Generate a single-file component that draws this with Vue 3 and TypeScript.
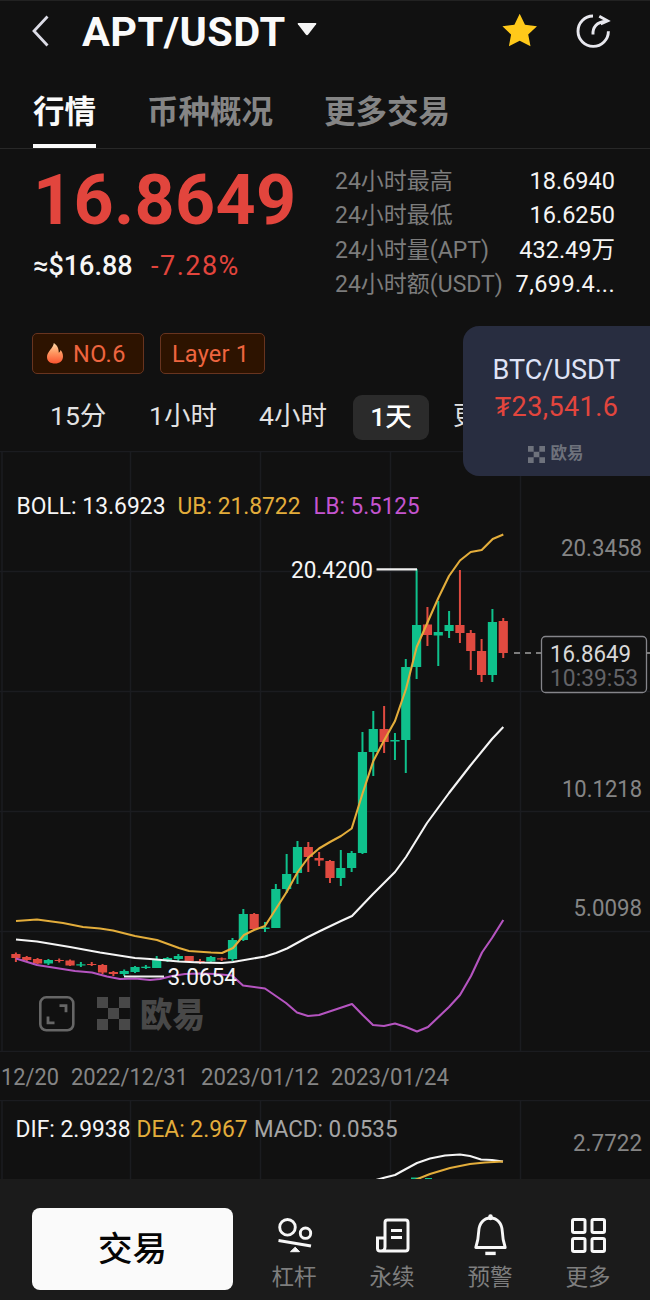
<script setup lang="ts">
interface Candle { x: number; top: number; bottom: number; high: number; low: number; up: boolean }
interface Label { text: string; x: number; y: number; w: number; cls: string }

const tabs: string[] = ['行情', '币种概况', '更多交易']
const stats: { label: string; value: string }[] = [
  { label: '24小时最高', value: '18.6940' },
  { label: '24小时最低', value: '16.6250' },
  { label: '24小时量(APT)', value: '432.49万' },
  { label: '24小时额(USDT)', value: '7,699.4...' },
]

// [body top, body bottom, wick high, wick low, rising]
const raw: [number, number, number, number, number][] = [
  [954, 958, 952.5, 962, 0], [957, 960, 956, 961, 0], [959, 963.5, 958, 964, 0], [960, 963.5, 959, 965, 1],
  [960, 961, 958.5, 962.5, 0], [960.5, 965.5, 959.5, 966, 0], [964.3, 965.5, 962, 967, 1], [964, 965, 962, 966, 0],
  [965, 972.5, 964, 974, 0], [972, 974, 971, 976, 0], [971, 974, 969.5, 976, 1], [967, 972, 966, 973, 1],
  [966.7, 968, 965, 969, 1], [960, 968, 956, 968, 1], [958, 961, 957, 962, 1], [956, 959, 954, 961, 1],
  [956, 961, 956, 961, 0], [961, 962, 959, 964, 0], [957, 961.5, 956, 962, 1], [958.3, 959.5, 957.5, 961, 0],
  [940, 959, 938, 961, 1], [914, 940, 909, 941, 1], [914, 929, 913, 930, 0], [927.5, 929, 922, 932, 1],
  [889, 928, 884, 928, 1], [874, 889, 854, 893, 1], [847, 873, 841, 884, 1], [847, 857, 842, 872, 0],
  [858, 860.5, 852, 866, 0], [861, 878, 860, 883, 0], [868, 878, 850, 886, 1], [853, 868, 851, 872, 1],
  [752, 853, 732, 854, 1], [729, 752, 711, 776, 1], [729, 742, 706, 753, 0], [740, 741.5, 733, 760, 1],
  [667, 740, 659, 773, 1], [625, 667, 569, 679, 1], [624.5, 635, 607, 646, 0], [632, 635.5, 601, 666, 1],
  [625, 631, 611, 638, 1], [625, 633, 570, 643, 0], [633, 651, 630, 670, 0], [651, 675, 639, 682, 0],
  [622, 675, 609, 682, 1], [621, 653, 618, 658, 0],
]
const candles: Candle[] = raw.map(([top, bottom, high, low, up], i) => ({
  x: 15.9 + i * 10.83, top, bottom, high, low, up: up === 1,
}))

const upper = '16,921 37,919.5 63,923 83,927 100,928.5 113,930.5 135,936 157,940 179,948 189,951 211,952.5 222,953 233,948 244,935 254,930 265,926 286.7,892 297.7,872 308,858 319,848.5 330,842 341,836 351.7,828.5 362.7,793 373.3,761 384.3,740 395,721 406,689 416.7,647 427.7,622 438.3,598 449,576 460,560.5 470.7,552 481.7,550 492.7,539 503.3,534.5'
const middle = '16,939.5 37,941.5 70,947 100,952.5 135,958 150,959 179,961.5 200,962.5 222,963 233,962 265,956.5 276,953 287,948.5 308,937 319,931.5 341,921 352,916 373,894 395,872 406,857 427,823 449,793 470,766 492,739 503.3,727'
const lower = '16,958.5 37,965 56,968 75,971 92,972.5 107,976.5 120,979 135,978.5 150,980 160,979 172,976 185,974 200,973.5 215,974 232,975.5 243,985.5 265,988.5 286,1003 297,1012.5 308,1016 319,1015 352,1004 362.7,1015 373,1025 384,1026 395,1023.5 406,1027 417,1031.5 428,1027 449,1007 460,995 471,976 482,952.5 492,938 503.3,920'

const gridX: number[] = [2, 130.5, 260.5, 390.5, 520.5]
const gridY: number[] = [451.5, 571.5, 691.5, 811.5, 931.5, 1051.5]

const labels: Label[] = [
  { text: 'BOLL: 13.6923', x: 16.5, y: 513.5, w: 149, cls: 'white' },
  { text: 'UB: 21.8722', x: 177.5, y: 513.5, w: 123, cls: 'gold' },
  { text: 'LB: 5.5125', x: 313.5, y: 513.5, w: 106, cls: 'violet' },
  { text: '20.3458', x: 561, y: 556, w: 81, cls: 'gray' },
  { text: '10.1218', x: 562, y: 796.5, w: 80, cls: 'gray' },
  { text: '5.0098', x: 573.5, y: 916, w: 68.5, cls: 'gray' },
  { text: '20.4200', x: 291, y: 578, w: 82, cls: 'white' },
  { text: '3.0654', x: 167.5, y: 985, w: 69.5, cls: 'white' },
]
const dates: Label[] = [
  { text: '12/20', x: 1, y: 33.5, w: 58, cls: 'gray' },
  { text: '2022/12/31', x: 71, y: 33.5, w: 117, cls: 'gray' },
  { text: '2023/01/12', x: 201, y: 33.5, w: 118, cls: 'gray' },
  { text: '2023/01/24', x: 331, y: 33.5, w: 118, cls: 'gray' },
]
const macd: Label[] = [
  { text: 'DIF: 2.9938', x: 15.5, y: 1136.5, w: 115, cls: 'white' },
  { text: 'DEA: 2.967', x: 136.5, y: 1136.5, w: 111, cls: 'gold' },
  { text: 'MACD: 0.0535', x: 254, y: 1136.5, w: 143.5, cls: 'silver' },
  { text: '2.7722', x: 573, y: 1150.5, w: 69, cls: 'gray' },
]
</script>

<template>
  <div class="screen">
    <header class="head">
      <svg class="back" width="22" height="36" viewBox="30 12 22 36"><path d="M47.5 15.500 34 30l13.500 14.500" fill="none" stroke="#dcdce6" stroke-width="2.800" /></svg>
      <h1>APT/USDT</h1>
      <svg class="caret" width="22" height="16" viewBox="0 0 22 16"><path d="M2.500 1h17q1.500 0 .6 1.200L12.200 12.600q-1.200 1.400-2.400 0L1.900 2.200Q1 1 2.500 1z" fill="#f5f5f5" /></svg>
      <span class="grow"></span>
      <svg width="36" height="36" viewBox="502 12 36 36"><path d="M519.700 12.800l5.300 10.900 12 1.600-8.800 8.300 2.300 11.700-10.800-5.600-10.800 5.600 2.200-11.700-8.700-8.300 12-1.600z" fill="#ffc91a" /></svg>
      <svg class="share" width="38" height="38" viewBox="574 11 38 38" fill="none" stroke="#e8e8ee" stroke-width="2.900">
        <path d="M593 15a15.200 15.200 0 1 0 15.400 15.200" />
        <path d="M593 33.500C592.500 26.500 596.500 20.800 606 20.200M599.300 15.300l8.200 4.500-6.800 3" />
      </svg>
    </header>

    <nav class="tabs">
      <span v-for="(t, i) in tabs" :key="t" :class="{ active: i === 0 }">{{ t }}</span>
    </nav>

    <section class="summary">
      <div class="quote">
        <div class="price">16.8649</div>
        <div class="sub"><span class="usd">≈$16.88</span><span class="pct">-7.28%</span></div>
      </div>
      <dl class="stats">
        <div v-for="s in stats" :key="s.label"><dt>{{ s.label }}</dt><dd>{{ s.value }}</dd></div>
      </dl>
    </section>

    <div class="chips">
      <span class="chip rank">
        <svg width="18" height="24" viewBox="0 0 18 24">
          <defs><linearGradient id="flame" x1="0" y1="0" x2="0" y2="1"><stop offset="0" stop-color="#ffd9a8" /><stop offset=".45" stop-color="#ff9a63" /><stop offset="1" stop-color="#fb5430" /></linearGradient></defs>
          <path d="M7.800 1C7.500 6 1 9.500 1 15 1 19.500 4.500 21.500 9 21.500s8-2.500 8-7c0-2.800-1-4.800-2.500-6.500-.3 1.500-.8 2.300-1.700 2.800C12.800 7 11.500 3.200 7.800 1z" fill="url(#flame)" />
        </svg>NO.6
      </span>
      <span class="chip layer">Layer 1</span>
    </div>

    <div class="frames">
      <span class="f15">15分</span><span class="f1h">1小时</span><span class="f4h">4小时</span><span class="day">1天</span><span class="more">更</span>
    </div>

    <svg class="chart" width="650" height="601" viewBox="0 451 650 601">
      <g class="grid">
        <path v-for="x in gridX" :key="'x' + x" :d="`M${x} 451V1051`" />
        <path v-for="y in gridY" :key="'y' + y" :d="`M0 ${y}H650`" />
      </g>
      <g class="watermark">
        <rect x="40.300" y="997.300" width="33" height="33" rx="6" fill="none" stroke="#666" stroke-width="2.600" />
        <path d="M59.500 1005.700H66v6.500M48 1016.500v6.300h6.500" fill="none" stroke="#666" stroke-width="2.800" />
        <path d="M97 997h11v11H97zM119 997h11v11h-11zM108 1008h11v11h-11zM97 1019h11v11H97zM119 1019h11v11h-11z" />
        <text x="140" y="1026.500" textLength="65" lengthAdjust="spacingAndGlyphs">欧易</text>
      </g>
      <g v-for="c in candles" :key="c.x" :class="c.up ? 'up' : 'down'">
        <rect :x="c.x - 1" :y="c.high" width="2" :height="c.low - c.high" />
        <rect :x="c.x - 4.6" :y="c.top" width="9.200" :height="c.bottom - c.top" />
      </g>
      <polyline :points="lower" stroke="#b554c0" />
      <polyline :points="middle" stroke="#f5f5f5" />
      <polyline :points="upper" stroke="#e3ad3b" />
      <path d="M376.500 569.300H417M124 976.500h40" stroke="#f0f0f0" stroke-width="2.200" />
      <path d="M514 653h6M525 653h6M536 653h5M646 653h4" stroke="#a0a0a0" stroke-width="1.500" />
      <rect x="541.500" y="636.500" width="105" height="56" rx="4" fill="#111" stroke="#85858a" stroke-width="1.300" />
      <text class="bright" x="550" y="661.500" textLength="81" lengthAdjust="spacingAndGlyphs">16.8649</text>
      <text class="dim" x="550" y="686" textLength="88" lengthAdjust="spacingAndGlyphs">10:39:53</text>
      <text v-for="l in labels" :key="l.text" :class="l.cls" :x="l.x" :y="l.y" :textLength="l.w" lengthAdjust="spacingAndGlyphs">{{ l.text }}</text>
    </svg>

    <svg class="chart" width="650" height="48" viewBox="0 1 650 48">
      <text v-for="l in dates" :key="l.text" :class="l.cls" :x="l.x" :y="l.y" :textLength="l.w" lengthAdjust="spacingAndGlyphs">{{ l.text }}</text>
    </svg>

    <svg class="chart" width="650" height="79" viewBox="0 1100 650 79">
      <g class="grid">
        <path d="M0 1100.500H650" />
        <path v-for="x in gridX" :key="x" :d="`M${x} 1100V1180`" />
      </g>
      <path class="up" d="M411 1177.500h10v2h-10zM425 1178h7v1.500h-7z" />
      <polyline points="376,1180 385,1177.500 395,1175 405,1169.500 417,1163 430,1158.500 445,1155.500 460,1154.500 470,1156 481,1159.500 492,1160 503,1161.500" stroke="#f5f5f5" />
      <polyline points="415,1180 430,1174 450,1168 470,1164 485,1162.500 503,1161.500" stroke="#e3ad3b" />
      <text v-for="l in macd" :key="l.text" :class="l.cls" :x="l.x" :y="l.y" :textLength="l.w" lengthAdjust="spacingAndGlyphs">{{ l.text }}</text>
    </svg>

    <footer class="bar">
      <button type="button">交易</button>
      <div class="action">
        <svg width="40" height="44" viewBox="274 1212 40 44" fill="none" stroke="#f7f7f7" stroke-width="2.900">
          <circle cx="287.500" cy="1227.300" r="7.800" /><circle cx="305.500" cy="1233.200" r="5.200" />
          <path d="M278.500 1240.500 311 1246" /><path d="M295.200 1247.200l4.300 4.500h-9z" fill="#f7f7f7" stroke-width="1" />
        </svg><span>杠杆</span>
      </div>
      <div class="action">
        <svg width="40" height="44" viewBox="372 1212 40 44" fill="none" stroke="#f7f7f7" stroke-width="3">
          <path d="M385 1238v-15.500q0-2.500 2.500-2.500h18q2.500 0 2.500 2.500v26q0 2.500-2.500 2.500h-25.500q-2.500 0-2.500-2.500V1238h7.500v9q0 4-4 4M391 1230.500h11M391 1237.500h11" />
        </svg><span>永续</span>
      </div>
      <div class="action">
        <svg width="40" height="44" viewBox="470.500 1212 40 44" fill="none" stroke="#f7f7f7" stroke-width="2.900" stroke-linejoin="round">
          <path d="M476.300 1247.500c1.600-5 2.700-10 2.900-16 .3-8 5-13.500 11.800-13.500s11.500 5.500 11.800 13.500c.2 6 1.300 11 2.900 16z" />
          <path d="M491 1216.500v1.500" stroke-width="4.500" stroke-linecap="round" /><path d="M485.800 1253.400h10.400" stroke-width="3.400" />
        </svg><span>预警</span>
      </div>
      <div class="action">
        <svg width="40" height="44" viewBox="568.500 1212 40 44" fill="none" stroke="#f7f7f7" stroke-width="3">
          <rect x="573" y="1219.500" width="12.500" height="13" rx="1.500" /><rect x="592.500" y="1219.500" width="12.500" height="13" rx="1.500" />
          <rect x="573" y="1238.500" width="12.500" height="13" rx="1.500" /><rect x="592.500" y="1238.500" width="12.500" height="13" rx="1.500" />
        </svg><span>更多</span>
      </div>
    </footer>

    <aside class="float">
      <div class="pair">BTC/USDT</div>
      <div class="last">₮23,541.6</div>
      <div class="brand">
        <svg width="17" height="17" viewBox="0 0 33 33"><path d="M0 0h11v11H0zM22 0h11v11H22zM11 11h11v11H11zM0 22h11v11H0zM22 22h11v11H22z" fill="currentColor" /></svg>欧易
      </div>
    </aside>
  </div>
</template>

<style>
body { margin: 0; background: #111; }
</style>

<style scoped>
.screen {
  position: relative; width: 650px; height: 1300px; overflow: hidden; background: #111; color: #f5f5f5;
  font-family: Roboto, "Noto Sans CJK SC", sans-serif; box-sizing: border-box; border-top: 1px solid #222;
}
svg { display: block; flex: none; }
.head { display: flex; align-items: center; height: 60px; padding: 0 38px 0 30px; }
.head h1 { margin: 2px 0 0 30px; width: 208px; font-size: 41.5px; line-height: 50px; font-weight: 700; letter-spacing: .45px; color: #fafafa; white-space: nowrap; }
.caret { margin: -2px 0 0 6px; }
.grow { flex: 1; }
.share { margin-left: 36px; }
.tabs { display: flex; gap: 51px; height: 87px; padding: 0 33px; border-bottom: 1px solid #282828; font-size: 31.5px; line-height: 46px; font-weight: 700; color: #858585; }
.tabs span { box-sizing: border-box; height: 87px; padding-top: 29px; }
.tabs .active { color: #fafafa; border-bottom: 4px solid #fafafa; }
.summary { display: flex; height: 184px; box-sizing: border-box; padding: 16px 35px 0 33px; }
.quote { width: 302px; }
.price { font-size: 70px; line-height: 70px; font-weight: 700; color: #e2453d; letter-spacing: .3px; white-space: nowrap; }
.sub { display: flex; margin-top: 13px; font-size: 27px; line-height: 36px; }
.usd { width: 118px; font-weight: 500; }
.pct { color: #e2453d; letter-spacing: 1.5px; }
.stats { flex: 1; margin: 0; white-space: nowrap; }
.stats div { display: flex; justify-content: space-between; height: 34.4px; line-height: 34.4px; }
dt { color: #7c7c7c; font-size: 23px; }
dd { margin: -1px 0 0; font-size: 23.500px; }
.stats div:last-child dd { letter-spacing: .4px; }
.chips { display: flex; gap: 16px; padding-left: 32px; height: 41px; }
.chip { display: flex; align-items: center; box-sizing: border-box; height: 41px; border: 1.5px solid #68341f; border-radius: 5px; background: #2d1300; color: #ee653f; font-size: 23.500px; }
.rank { width: 112px; padding-left: 13px; gap: 9px; letter-spacing: .4px; }
.layer { width: 105px; padding-left: 11px; letter-spacing: .2px; }
.frames { display: flex; align-items: center; height: 77px; padding: 10px 0 0 50px; box-sizing: border-box; font-size: 26.5px; color: #e2e2e2; white-space: nowrap; }
.frames > span { position: relative; line-height: 44px; padding-bottom: 4px; box-sizing: border-box; }
.f15 { width: 99px; }
.f1h { width: 110px; }
.f4h { width: 94px; }
.frames > .day { width: 76px; height: 45px; padding: 0; line-height: 44px; border-radius: 9px; background: #2b2b2b; text-align: center; color: #fff; font-weight: 500; }
.more { margin-left: 24px; width: 11px; overflow: hidden; }
.chart text { font-size: 23px; }
.grid path { stroke: #1b1c20; stroke-width: 1.5; fill: none; }
polyline { fill: none; stroke-width: 2.1; stroke-linejoin: round; }
.up { fill: #0fc18c; }
.down { fill: #e04a40; }
.white { fill: #f5f5f5; }
.gold { fill: #e3ad3b; }
.violet { fill: #c455cf; }
.gray { fill: #858585; }
.silver { fill: #a5a5a5; }
.bright { fill: #d8d8d8; }
.dim { fill: #636367; }
.watermark { fill: #484848; }
.chart .watermark text { font-size: 34px; font-weight: 900; }
.bar { display: flex; align-items: flex-start; height: 121px; box-sizing: border-box; padding: 29px 13px 0 32px; background: #1b1b1b; }
.bar button { width: 201px; height: 82px; margin-right: 12px; padding: 0; border: 0; border-radius: 8px; background: #fafafa; color: #050505; font: 500 34.5px/81px Roboto, "Noto Sans CJK SC", sans-serif; }
.action { display: flex; flex-direction: column; align-items: center; width: 98px; padding-top: 4px; font-size: 22.5px; line-height: 36px; color: #7e7e7e; }
.action span { margin-top: 3px; }
.float { position: absolute; right: 0; top: 325px; width: 187px; height: 150px; box-sizing: border-box; padding-top: 26px; border-radius: 16px 0 0 16px; background: #282d40; text-align: center; white-space: nowrap; }
.pair { font-size: 27px; line-height: 36px; color: #dfe3f5; }
.last { margin-top: 1px; font-size: 27px; line-height: 36px; color: #e2453d; letter-spacing: .4px; }
.brand { display: flex; justify-content: center; align-items: center; gap: 6px; margin-top: 17px; padding-right: 2px; font-size: 16.500px; line-height: 24px; font-weight: 700; color: #6e727c; }
</style>
